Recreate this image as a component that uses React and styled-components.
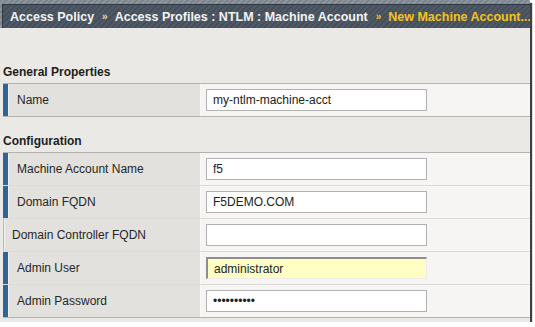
import React from "react";
import styled, { createGlobalStyle } from "styled-components";

const Global = createGlobalStyle`
  html, body { margin: 0; padding: 0; background: #ffffff; }
  body { font-family: "Liberation Sans", Arial, sans-serif; }
`;

const Frame = styled.div`
  width: 530px;
  background: #ebe9e5;
  box-shadow: 2px 3px 1px rgba(30, 30, 30, 0.85);
  padding-bottom: 4px;
`;

const Header = styled.div`
  padding: 4px 0 0 2px;
  background: repeating-linear-gradient(135deg, #7c848e 0 2px, #8c949d 2px 4px);
`;

const HeaderBar = styled.div`
  height: 23px;
  display: flex;
  align-items: center;
  padding-left: 7px;
  border-top: 1px solid #2f3741;
  border-left: 1px solid #2f3741;
  background: repeating-linear-gradient(135deg, #46505c 0 2px, #505a66 2px 4px);
  font-weight: bold;
  font-size: 12.5px;
  color: #f4f4f4;
  white-space: nowrap;
  overflow: hidden;
`;

const Crumb = styled.span`
  color: ${(p) => (p.$current ? "#f5c417" : "#f4f4f4")};
`;

const Sep = styled.span`
  font-size: 10px;
  margin: 0 7px 0 8px;
  color: ${(p) => (p.$current ? "#f5c417" : "#e2d9b6")};
`;

const Body = styled.div`
  padding-left: 3px;
`;

const SectionTitle = styled.div`
  height: ${(p) => p.$height}px;
  box-sizing: border-box;
  display: flex;
  align-items: flex-end;
  padding-bottom: 4px;
  font-weight: bold;
  font-size: 12px;
  line-height: 14px;
  color: #1e1e1e;
`;

const Table = styled.div`
  border-top: 1px solid #b2b2b0;
  border-bottom: 1px solid #b2b2b0;
`;

const Row = styled.div`
  display: flex;
  height: 32px;
  border-top: ${(p) => (p.$first ? "none" : "1px solid #dedcd8")};
`;

const Label = styled.div`
  width: 197px;
  box-sizing: border-box;
  display: flex;
  align-items: center;
  background: #e2e1dd;
  border-left: ${(p) => (p.$required ? "5px solid #2f6497" : "1px solid #b9b9b7")};
  box-shadow: inset 1px 0 0 #f2f1ee;
  padding-left: ${(p) => (p.$required ? 9 : 8)}px;
  font-size: 12px;
  color: #262626;
`;

const Value = styled.div`
  flex: 1;
  display: flex;
  align-items: center;
  background: #f6f5f3;
  border-left: 1px solid #faf9f7;
  padding-left: 5px;
`;

const Field = styled.input`
  width: 221px;
  height: 22px;
  box-sizing: border-box;
  margin: 0;
  padding: 0 6px;
  font-family: "Liberation Sans", Arial, sans-serif;
  font-size: 12px;
  color: #222;
  background: ${(p) => (p.$highlight ? "#ffffc4" : "#ffffff")};
  border-style: solid;
  border-width: ${(p) => (p.$highlight ? "2px 1px 1px 2px" : "1px")};
  border-color: ${(p) =>
    p.$highlight ? "#8e8e8e #ececec #ececec #8e8e8e" : "#b1b1b1"};
  outline: none;
`;

const FormRow = ({ label, required, value, highlight, first }) => (
  <Row $first={first}>
    <Label $required={required}>{label}</Label>
    <Value>
      <Field readOnly value={value} $highlight={highlight} />
    </Value>
  </Row>
);

export default function App() {
  return (
    <>
      <Global />
      <Frame>
        <Header>
          <HeaderBar>
            <Crumb>Access Policy</Crumb>
            <Sep>»</Sep>
            <Crumb>Access Profiles : NTLM : Machine Account</Crumb>
            <Sep $current>»</Sep>
            <Crumb $current>New Machine Account...</Crumb>
          </HeaderBar>
        </Header>
        <Body>
          <SectionTitle $height={55}>General Properties</SectionTitle>
          <Table>
            <FormRow first required label="Name" value="my-ntlm-machine-acct" />
          </Table>
          <SectionTitle $height={35}>Configuration</SectionTitle>
          <Table>
            <FormRow first required label="Machine Account Name" value="f5" />
            <FormRow required label="Domain FQDN" value="F5DEMO.COM" />
            <FormRow label="Domain Controller FQDN" value="" />
            <FormRow required label="Admin User" value="administrator" highlight />
            <FormRow required label="Admin Password" value="••••••••••" />
          </Table>
        </Body>
      </Frame>
    </>
  );
}
